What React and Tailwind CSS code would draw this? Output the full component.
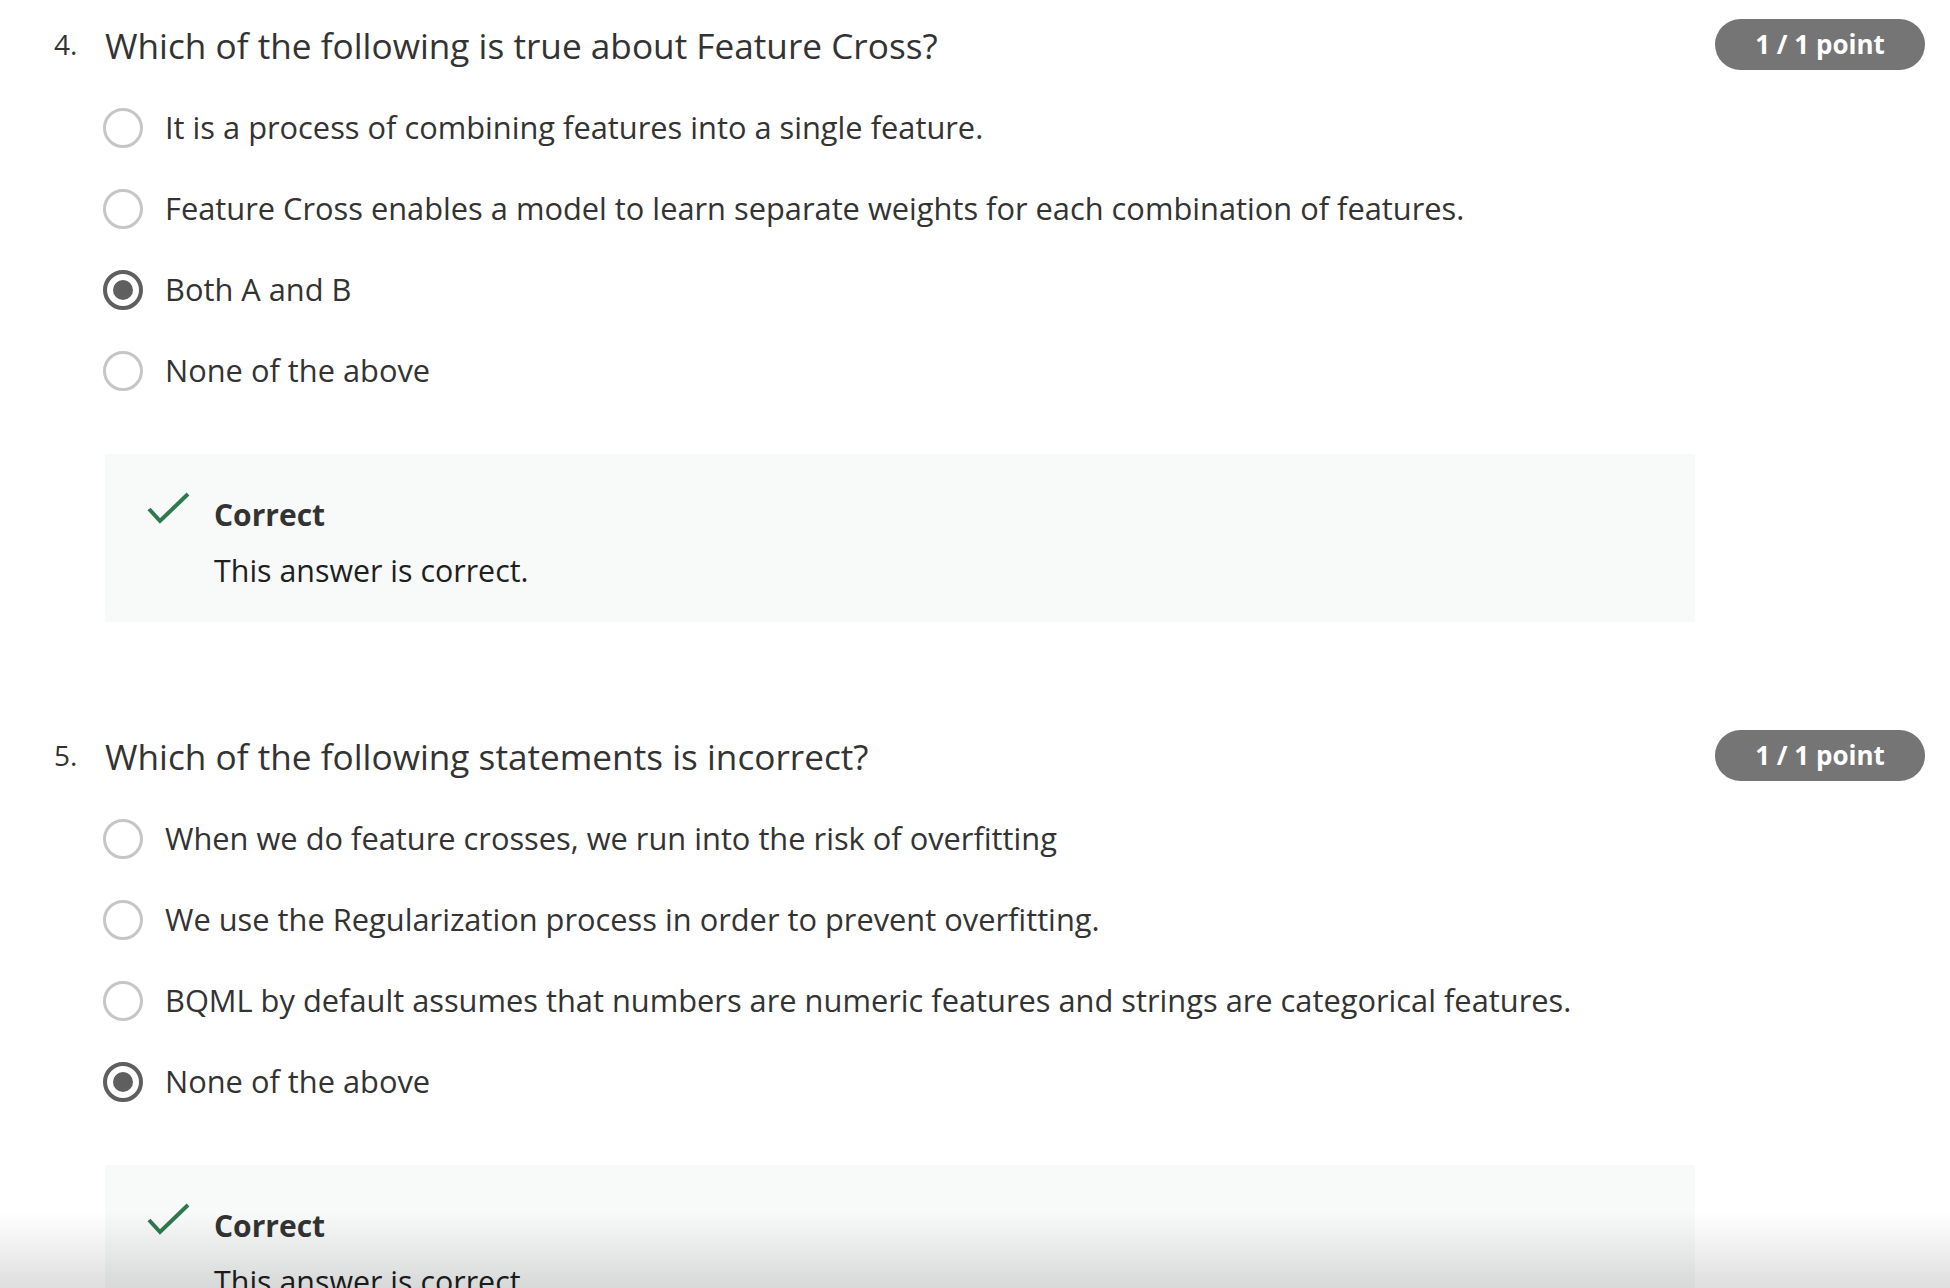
import React from "react";

const questions = [
  {
    num: "4.",
    text: "Which of the following is true about Feature Cross?",
    options: [
      "It is a process of combining features into a single feature.",
      "Feature Cross enables a model to learn separate weights for each combination of features.",
      "Both A and B",
      "None of the above",
    ],
    selected: 2,
  },
  {
    num: "5.",
    text: "Which of the following statements is incorrect?",
    options: [
      "When we do feature crosses, we run into the risk of overfitting",
      "We use the Regularization process in order to prevent overfitting.",
      "BQML by default assumes that numbers are numeric features and strings are categorical features.",
      "None of the above",
    ],
    selected: 3,
  },
];

function Radio({ checked }) {
  if (checked) {
    return (
      <span className="flex h-[40px] w-[40px] shrink-0 items-center justify-center rounded-full border-[4px] border-[#5f5f5f]">
        <span className="h-[20px] w-[20px] rounded-full bg-[#5f5f5f]" />
      </span>
    );
  }
  return (
    <span className="h-[40px] w-[40px] shrink-0 rounded-full border-[3px] border-[#c6c6c6]" />
  );
}

function Feedback() {
  return (
    <div className="mt-[43px] flex h-[168px] w-[1590px] bg-[#f8f9f9] pl-[42px] pt-[43px]">
      <svg width="44" height="34" viewBox="0 0 44 34" className="-mt-[5px] shrink-0">
        <path
          d="M2 17 L13 29 L41 2"
          fill="none"
          stroke="#2f7a4f"
          strokeWidth="4"
        />
      </svg>
      <div className="ml-[23px] -mt-[2px]">
        <p className="text-[30px] font-bold leading-[40px] text-[#333333]">
          Correct
        </p>
        <p className="mt-[16px] text-[30.4px] leading-[40px] text-[#1f1f1f]">
          This answer is correct.
        </p>
      </div>
    </div>
  );
}

function Question({ q }) {
  return (
    <section className="flex pl-[54px] pr-[25px]">
      <div className="w-[51px] shrink-0 pt-[1px] text-[28px] leading-[36px] text-[#333333]">
        {q.num}
      </div>
      <div className="flex-1">
        <div className="flex items-start justify-between">
          <h2 className="text-[35.2px] leading-[40px] text-[#333333]">{q.text}</h2>
          <span className="-mt-[6px] flex h-[51px] w-[210px] items-center justify-center rounded-full bg-[#757575] text-[26px] font-bold text-white">
            1 / 1 point
          </span>
        </div>
        <ul className="mt-[17px]">
          {q.options.map((opt, i) => (
            <li key={i} className="-ml-[2px] flex h-[81px] items-center gap-[22px]">
              <Radio checked={i === q.selected} />
              <span className="text-[30.8px] text-[#333333]">{opt}</span>
            </li>
          ))}
        </ul>
        <Feedback />
      </div>
    </section>
  );
}

export default function App() {
  return (
    <div
      className="relative min-h-[1288px] overflow-hidden bg-white pt-[25px]"
      style={{ fontFamily: '"Open Sans", "Noto Sans", sans-serif' }}
    >
      <Question q={questions[0]} />
      <div className="h-[114px]" />
      <Question q={questions[1]} />
      <div className="pointer-events-none fixed bottom-0 left-0 right-0 h-[75px] bg-linear-to-b from-transparent to-[rgba(0,0,0,0.13)]" />
    </div>
  );
}
